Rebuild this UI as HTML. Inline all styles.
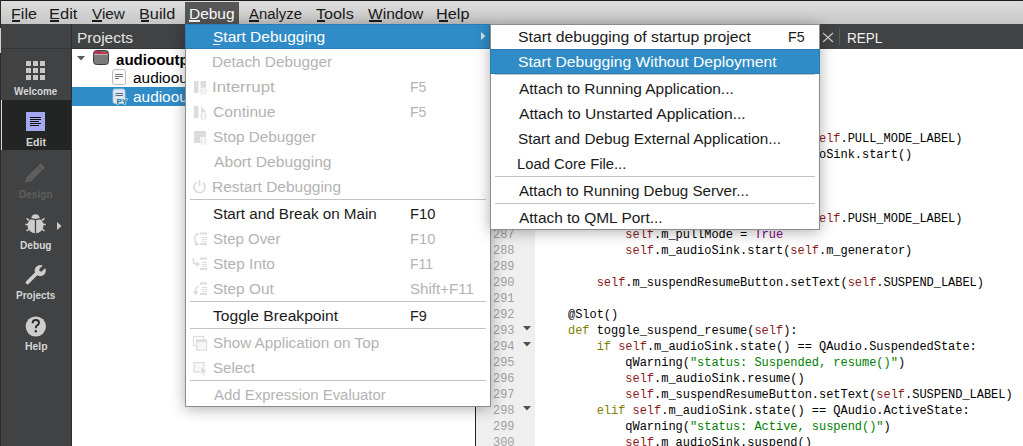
<!DOCTYPE html><html><head><meta charset="utf-8"><style>
*{margin:0;padding:0}
html,body{width:1023px;height:446px;overflow:hidden;background:#fff}
body>div{position:absolute}
.t{position:absolute;white-space:nowrap}
.t u{text-decoration:underline;text-underline-offset:2px}
.c{position:absolute;left:539.3px;font:12px/16px 'Liberation Mono',monospace;letter-spacing:-0.03px;white-space:pre;color:#000}
.ln{position:absolute;left:477.5px;width:37px;text-align:right;font:12px/16px 'Liberation Mono',monospace;letter-spacing:-0.03px;color:#a0a0a0}
</style></head><body>
<div style="left:0px;top:0px;width:1023px;height:446px;background:#ffffff;"></div>
<div style="left:0px;top:0px;width:1023px;height:24px;background:linear-gradient(#dfdfdf,#c7c7c7);"></div>
<div style="left:0px;top:0px;width:1023px;height:1px;background:#1c1c1c;"></div>
<div style="left:0px;top:0px;width:1px;height:446px;background:#2a2a2a;"></div>
<div style="left:1px;top:24px;width:1022px;height:25px;background:#404244;"></div>
<div style="left:1px;top:49px;width:71px;height:397px;background:#404244;"></div>
<div style="left:1px;top:48px;width:474px;height:1px;background:#333537;"></div>
<div style="left:71px;top:24px;width:1px;height:422px;background:#2e2f30;"></div>
<div style="left:1px;top:100px;width:70px;height:50px;background:#232424;"></div>
<div style="left:0px;top:28px;width:1px;height:25px;background:#cfcfcf;"></div>
<div style="left:1px;top:100px;width:1px;height:50px;background:#d8d8d8;"></div>
<div style="left:475px;top:49px;width:1px;height:397px;background:#232323;"></div>
<div style="left:476px;top:49px;width:59px;height:397px;background:#efefef;"></div>
<div style="left:185px;top:2px;width:54px;height:22px;background:#565656;"></div>
<div id="mb0" class="t" style="left:10.74px;top:5.40px;font-size:14px;line-height:18px;color:#1a1a1a;font-weight:normal;font-family:'Liberation Sans',sans-serif;transform:scaleX(1.1485);transform-origin:0 0;">File</div>
<div style="left:12px;top:20px;width:8px;height:2px;background:#1a1a1a;"></div>
<div id="mb1" class="t" style="left:49.21px;top:5.40px;font-size:14px;line-height:18px;color:#1a1a1a;font-weight:normal;font-family:'Liberation Sans',sans-serif;transform:scaleX(1.1786);transform-origin:0 0;">Edit</div>
<div style="left:50px;top:20px;width:9px;height:2px;background:#1a1a1a;"></div>
<div id="mb2" class="t" style="left:92.00px;top:5.40px;font-size:14px;line-height:18px;color:#1a1a1a;font-weight:normal;font-family:'Liberation Sans',sans-serif;transform:scaleX(1.0905);transform-origin:0 0;">View</div>
<div style="left:92px;top:20px;width:10px;height:2px;background:#1a1a1a;"></div>
<div id="mb3" class="t" style="left:138.73px;top:5.40px;font-size:14px;line-height:18px;color:#1a1a1a;font-weight:normal;font-family:'Liberation Sans',sans-serif;transform:scaleX(1.1624);transform-origin:0 0;">Build</div>
<div style="left:141px;top:20px;width:8px;height:2px;background:#1a1a1a;"></div>
<div id="mb4" class="t" style="left:188.79px;top:5.40px;font-size:14px;line-height:18px;color:#ffffff;font-weight:normal;font-family:'Liberation Sans',sans-serif;transform:scaleX(1.1048);transform-origin:0 0;">Debug</div>
<div style="left:189px;top:20px;width:11px;height:2px;background:#ffffff;"></div>
<div id="mb5" class="t" style="left:249.00px;top:5.40px;font-size:14px;line-height:18px;color:#1a1a1a;font-weight:normal;font-family:'Liberation Sans',sans-serif;transform:scaleX(1.0642);transform-origin:0 0;">Analyze</div>
<div style="left:249px;top:20px;width:10px;height:2px;background:#1a1a1a;"></div>
<div id="mb6" class="t" style="left:316.25px;top:5.40px;font-size:14px;line-height:18px;color:#1a1a1a;font-weight:normal;font-family:'Liberation Sans',sans-serif;transform:scaleX(1.1553);transform-origin:0 0;">Tools</div>
<div style="left:317px;top:20px;width:8px;height:2px;background:#1a1a1a;"></div>
<div id="mb7" class="t" style="left:367.50px;top:5.40px;font-size:14px;line-height:18px;color:#1a1a1a;font-weight:normal;font-family:'Liberation Sans',sans-serif;transform:scaleX(1.1108);transform-origin:0 0;">Window</div>
<div style="left:369px;top:20px;width:13px;height:2px;background:#1a1a1a;"></div>
<div id="mb8" class="t" style="left:436.23px;top:5.40px;font-size:14px;line-height:18px;color:#1a1a1a;font-weight:normal;font-family:'Liberation Sans',sans-serif;transform:scaleX(1.1610);transform-origin:0 0;">Help</div>
<div style="left:439px;top:20px;width:9px;height:2px;background:#1a1a1a;"></div>
<div id="ph" class="t" style="left:76.59px;top:29.40px;font-size:14px;line-height:18px;color:#e6e6e6;font-weight:normal;font-family:'Liberation Sans',sans-serif;transform:scaleX(1.1093);transform-origin:0 0;">Projects</div>
<svg style="position:absolute;left:822px;top:32px" width="12" height="11"><path d="M1 1L11 10M11 1L1 10" stroke="#cfcfcf" stroke-width="1.2"/></svg>
<div style="left:839px;top:29px;width:1px;height:16px;background:#5a5c5e;"></div>
<div id="repl" class="t" style="left:847.44px;top:29.40px;font-size:14px;line-height:18px;color:#f0f0f0;font-weight:normal;font-family:'Liberation Sans',sans-serif;transform:scaleX(0.9678);transform-origin:0 0;">REPL</div>
<div style="left:26px;top:61px;width:5px;height:5px;background:#c8c8c8;"></div>
<div style="left:33px;top:61px;width:5px;height:5px;background:#c8c8c8;"></div>
<div style="left:40px;top:61px;width:5px;height:5px;background:#c8c8c8;"></div>
<div style="left:26px;top:68px;width:5px;height:5px;background:#c8c8c8;"></div>
<div style="left:33px;top:68px;width:5px;height:5px;background:#c8c8c8;"></div>
<div style="left:40px;top:68px;width:5px;height:5px;background:#c8c8c8;"></div>
<div style="left:26px;top:75px;width:5px;height:5px;background:#c8c8c8;"></div>
<div style="left:33px;top:75px;width:5px;height:5px;background:#c8c8c8;"></div>
<div style="left:40px;top:75px;width:5px;height:5px;background:#c8c8c8;"></div>
<div id="mw" class="t" style="left:14.30px;top:85.86px;font-size:10px;line-height:12px;color:#d6d6d6;font-weight:bold;font-family:'Liberation Sans',sans-serif;transform:scaleX(0.9883);transform-origin:0 0;">Welcome</div>
<div style="left:26px;top:112px;width:19px;height:19px;background:#a3a8ef;"></div>
<div style="left:30px;top:117px;width:11px;height:1px;background:#111;"></div>
<div style="left:30px;top:119px;width:11px;height:1px;background:#111;"></div>
<div style="left:30px;top:121px;width:9px;height:1px;background:#111;"></div>
<div style="left:30px;top:123px;width:11px;height:1px;background:#111;"></div>
<div style="left:30px;top:125px;width:9px;height:1px;background:#111;"></div>
<div id="me" class="t" style="left:25.51px;top:136.85px;font-size:10px;line-height:12px;color:#d6d6d6;font-weight:bold;font-family:'Liberation Sans',sans-serif;transform:scaleX(1.0575);transform-origin:0 0;">Edit</div>
<svg style="position:absolute;left:20px;top:158px" width="32" height="30"><path d="M5 24.5 L6.6 19.2 L20.6 5.2 L24.8 9.4 L10.8 23.4 Z" fill="#5f5f5f"/><path d="M17.6 8.2 L21.8 12.4" stroke="#404244" stroke-width="1"/></svg>
<div id="md" class="t" style="left:19.05px;top:188.85px;font-size:10px;line-height:12px;color:#5e5e5e;font-weight:bold;font-family:'Liberation Sans',sans-serif;transform:scaleX(1.0068);transform-origin:0 0;">Design</div>
<svg style="position:absolute;left:22px;top:210px" width="28" height="26"><path d="M9.2 8.6 A4.3 4.3 0 0 1 17.8 8.6 Z" fill="#cdcdcd"/><ellipse cx="13.5" cy="15.4" rx="8" ry="7.8" fill="#cdcdcd"/><path d="M7.5 8.3 L13.5 9.6 L19.5 8.3" fill="none" stroke="#404244" stroke-width="1.2"/><path d="M13.5 9.5 V23.5" stroke="#404244" stroke-width="1.3"/><path d="M4.5 8.3L7.2 10.6M3.3 14.5H6.3M4.5 21L7.2 18.8M22.5 8.3L19.8 10.6M23.7 14.5H20.7M22.5 21L19.8 18.8" stroke="#cdcdcd" stroke-width="1.5"/></svg>
<svg style="position:absolute;left:57px;top:222px" width="5" height="8"><path d="M0 0L4.5 4L0 8Z" fill="#cdcdcd"/></svg>
<div id="mdb" class="t" style="left:20.14px;top:239.85px;font-size:10px;line-height:12px;color:#d6d6d6;font-weight:bold;font-family:'Liberation Sans',sans-serif;transform:scaleX(1.0134);transform-origin:0 0;">Debug</div>
<svg style="position:absolute;left:20px;top:260px" width="32" height="30"><path d="M7.5 22.5 L15.5 14.5" stroke="#cdcdcd" stroke-width="3.8" stroke-linecap="round"/><circle cx="20.2" cy="10.6" r="5.6" fill="#cdcdcd"/><path d="M21 9.8 L27 3.8" stroke="#404244" stroke-width="3.4" stroke-linecap="round"/></svg>
<div id="mp" class="t" style="left:16.05px;top:289.86px;font-size:10px;line-height:12px;color:#d6d6d6;font-weight:bold;font-family:'Liberation Sans',sans-serif;transform:scaleX(0.9987);transform-origin:0 0;">Projects</div>
<svg style="position:absolute;left:20px;top:310px" width="32" height="30"><circle cx="15.8" cy="16.5" r="10.1" fill="#cdcdcd"/><path d="M12.6 13.3 Q12.6 10 15.8 10 Q19 10 19 12.8 Q19 14.6 16.8 15.6 Q15.8 16.2 15.8 18.2" fill="none" stroke="#2a2a2a" stroke-width="1.9"/><circle cx="15.8" cy="21.2" r="1.2" fill="#2a2a2a"/></svg>
<div id="mh" class="t" style="left:24.82px;top:340.86px;font-size:10px;line-height:12px;color:#d6d6d6;font-weight:bold;font-family:'Liberation Sans',sans-serif;transform:scaleX(1.0431);transform-origin:0 0;">Help</div>
<svg style="position:absolute;left:77px;top:56px" width="8" height="5"><path d="M0 0H8L4 4.5Z" fill="#5a5a5a"/></svg>
<svg style="position:absolute;left:93px;top:50px" width="16" height="15"><rect x="0.5" y="0.5" width="15" height="14" rx="3" fill="#7a7a7a" stroke="#4a3838"/><path d="M1.2 2.2 Q1.5 1 3 1 H7 L8 2 H14 Q15 2.2 15 3.5 V4 H1.2Z" fill="#c23a3a"/><rect x="1.2" y="1.5" width="6.5" height="2.2" fill="#b02f70"/><rect x="1" y="4" width="14" height="1" fill="#b0b4b4"/></svg>
<div id="t1" class="t" style="left:115.56px;top:50.90px;font-size:14px;line-height:18px;color:#000;font-weight:bold;font-family:'Liberation Sans',sans-serif;transform:scaleX(1.0760);transform-origin:0 0;">audiooutput</div>
<svg style="position:absolute;left:112px;top:69px" width="14" height="16"><rect x="0.5" y="0.5" width="13" height="15" rx="2" fill="#fafafa" stroke="#bdbdbd"/><path d="M3 5.5H11M3 7.5H11M3 9.5H7" stroke="#7a7a7a" stroke-width="1"/></svg>
<div id="t2" class="t" style="left:133.02px;top:69.40px;font-size:14px;line-height:18px;color:#000;font-weight:normal;font-family:'Liberation Sans',sans-serif;transform:scaleX(1.1000);transform-origin:0 0;">audiooutput.pyproject</div>
<div style="left:72px;top:87px;width:403px;height:19px;background:#308cc6;"></div>
<svg style="position:absolute;left:112px;top:88px" width="17" height="17"><rect x="1" y="1" width="12" height="14.5" rx="2" fill="#dce7f3" stroke="#b5c9de" stroke-width="0.8"/><path d="M3.5 5.5H11M3.5 7.5H11" stroke="#5a6878" stroke-width="1"/><text x="4.6" y="15.6" font-family="Liberation Sans, sans-serif" font-weight="bold" font-size="8" fill="#17788b" stroke="#dce7f3" stroke-width="1.2" paint-order="stroke" letter-spacing="-0.3">PY</text></svg>
<div id="t3" class="t" style="left:133.02px;top:88.40px;font-size:14px;line-height:18px;color:#ffffff;font-weight:normal;font-family:'Liberation Sans',sans-serif;transform:scaleX(1.1000);transform-origin:0 0;">audiooutput.py</div>
<svg style="position:absolute;left:523px;top:70px" width="8" height="5"><path d="M0 0H8L4 4.5Z" fill="#505050"/></svg>
<svg style="position:absolute;left:523px;top:118px" width="8" height="5"><path d="M0 0H8L4 4.5Z" fill="#505050"/></svg>
<svg style="position:absolute;left:523px;top:198px" width="8" height="5"><path d="M0 0H8L4 4.5Z" fill="#505050"/></svg>
<svg style="position:absolute;left:523px;top:326px" width="8" height="5"><path d="M0 0H8L4 4.5Z" fill="#505050"/></svg>
<svg style="position:absolute;left:523px;top:342px" width="8" height="5"><path d="M0 0H8L4 4.5Z" fill="#505050"/></svg>
<svg style="position:absolute;left:523px;top:406px" width="8" height="5"><path d="M0 0H8L4 4.5Z" fill="#505050"/></svg>
<div class="c" style="top:50.5px">    @Slot()</div>
<div class="ln" style="top:50.5px">276</div>
<div class="c" style="top:66.5px">    <span style="color:#808000">def</span> toggle_mode(<span style="color:#8b1c1c">self</span>):</div>
<div class="ln" style="top:66.5px">277</div>
<div class="c" style="top:82.5px">        <span style="color:#8b1c1c">self</span>.m_pullTimer.stop()</div>
<div class="ln" style="top:82.5px">278</div>
<div class="c" style="top:98.5px">        <span style="color:#8b1c1c">self</span>.m_audioSink.stop()</div>
<div class="ln" style="top:98.5px">279</div>
<div class="c" style="top:114.5px">        <span style="color:#808000">if</span> <span style="color:#8b1c1c">self</span>.m_pullMode:</div>
<div class="ln" style="top:114.5px">280</div>
<div class="c" style="top:130.5px">            <span style="color:#8b1c1c">self</span>.m_modeButton.setText(<span style="color:#8b1c1c">self</span>.PULL_MODE_LABEL)</div>
<div class="ln" style="top:130.5px">281</div>
<div class="c" style="top:146.5px">            <span style="color:#8b1c1c">self</span>.m_output = <span style="color:#8b1c1c">self</span>.m_audioSink.start()</div>
<div class="ln" style="top:146.5px">282</div>
<div class="c" style="top:162.5px">            <span style="color:#8b1c1c">self</span>.m_pullMode = <span style="color:#800080">False</span></div>
<div class="ln" style="top:162.5px">283</div>
<div class="c" style="top:178.5px">            <span style="color:#8b1c1c">self</span>.m_pullTimer.start(20)</div>
<div class="ln" style="top:178.5px">284</div>
<div class="c" style="top:194.5px">        <span style="color:#808000">else</span>:</div>
<div class="ln" style="top:194.5px">285</div>
<div class="c" style="top:210.5px">            <span style="color:#8b1c1c">self</span>.m_modeButton.setText(<span style="color:#8b1c1c">self</span>.PUSH_MODE_LABEL)</div>
<div class="ln" style="top:210.5px">286</div>
<div class="c" style="top:226.5px">            <span style="color:#8b1c1c">self</span>.m_pullMode = <span style="color:#800080">True</span></div>
<div class="ln" style="top:226.5px">287</div>
<div class="c" style="top:242.5px">            <span style="color:#8b1c1c">self</span>.m_audioSink.start(<span style="color:#8b1c1c">self</span>.m_generator)</div>
<div class="ln" style="top:242.5px">288</div>
<div class="c" style="top:258.5px"></div>
<div class="ln" style="top:258.5px">289</div>
<div class="c" style="top:274.5px">        <span style="color:#8b1c1c">self</span>.m_suspendResumeButton.setText(<span style="color:#8b1c1c">self</span>.SUSPEND_LABEL)</div>
<div class="ln" style="top:274.5px">290</div>
<div class="c" style="top:290.5px"></div>
<div class="ln" style="top:290.5px">291</div>
<div class="c" style="top:306.5px">    @Slot()</div>
<div class="ln" style="top:306.5px">292</div>
<div class="c" style="top:322.5px">    <span style="color:#808000">def</span> toggle_suspend_resume(<span style="color:#8b1c1c">self</span>):</div>
<div class="ln" style="top:322.5px">293</div>
<div class="c" style="top:338.5px">        <span style="color:#808000">if</span> <span style="color:#8b1c1c">self</span>.m_audioSink.state() == QAudio.SuspendedState:</div>
<div class="ln" style="top:338.5px">294</div>
<div class="c" style="top:354.5px">            qWarning(<span style="color:#008000">"status: Suspended, resume()"</span>)</div>
<div class="ln" style="top:354.5px">295</div>
<div class="c" style="top:370.5px">            <span style="color:#8b1c1c">self</span>.m_audioSink.resume()</div>
<div class="ln" style="top:370.5px">296</div>
<div class="c" style="top:386.5px">            <span style="color:#8b1c1c">self</span>.m_suspendResumeButton.setText(<span style="color:#8b1c1c">self</span>.SUSPEND_LABEL)</div>
<div class="ln" style="top:386.5px">297</div>
<div class="c" style="top:402.5px">        <span style="color:#808000">elif</span> <span style="color:#8b1c1c">self</span>.m_audioSink.state() == QAudio.ActiveState:</div>
<div class="ln" style="top:402.5px">298</div>
<div class="c" style="top:418.5px">            qWarning(<span style="color:#008000">"status: Active, suspend()"</span>)</div>
<div class="ln" style="top:418.5px">299</div>
<div class="c" style="top:434.5px">            <span style="color:#8b1c1c">self</span>.m_audioSink.suspend()</div>
<div class="ln" style="top:434.5px">300</div>
<div style="left:185px;top:24px;width:306px;height:383px;background:#fff;box-shadow:0 2px 14px rgba(0,0,0,0.32);box-sizing:border-box;border:1px solid #8c8c8c;"></div>
<div style="left:185px;top:24px;width:305px;height:25px;background:#308cc6;box-sizing:border-box;border:1px solid #2b7cb4;"></div>
<div id="dm0" class="t" style="left:213.02px;top:28.40px;font-size:14px;line-height:18px;color:#ffffff;font-weight:normal;font-family:'Liberation Sans',sans-serif;transform:scaleX(1.1085);transform-origin:0 0;">Start Debugging</div>
<div style="left:213px;top:44px;width:7px;height:1px;background:#ffffff;"></div>
<div id="dm1" class="t" style="left:212.30px;top:53.40px;font-size:14px;line-height:18px;color:#b3b3b3;font-weight:normal;font-family:'Liberation Sans',sans-serif;transform:scaleX(1.0951);transform-origin:0 0;">Detach Debugger</div>
<div id="dm2" class="t" style="left:212.18px;top:78.40px;font-size:14px;line-height:18px;color:#b3b3b3;font-weight:normal;font-family:'Liberation Sans',sans-serif;transform:scaleX(1.2037);transform-origin:0 0;">Interrupt</div>
<div id="dms2" class="t" style="left:409.70px;top:78.40px;font-size:14px;line-height:18px;color:#b3b3b3;font-weight:normal;font-family:'Liberation Sans',sans-serif;transform:scaleX(1.0016);transform-origin:0 0;">F5</div>
<div id="dm3" class="t" style="left:212.77px;top:103.40px;font-size:14px;line-height:18px;color:#b3b3b3;font-weight:normal;font-family:'Liberation Sans',sans-serif;transform:scaleX(1.1146);transform-origin:0 0;">Continue</div>
<div id="dms3" class="t" style="left:409.70px;top:103.40px;font-size:14px;line-height:18px;color:#b3b3b3;font-weight:normal;font-family:'Liberation Sans',sans-serif;transform:scaleX(1.0016);transform-origin:0 0;">F5</div>
<div id="dm4" class="t" style="left:213.02px;top:128.40px;font-size:14px;line-height:18px;color:#b3b3b3;font-weight:normal;font-family:'Liberation Sans',sans-serif;transform:scaleX(1.0921);transform-origin:0 0;">Stop Debugger</div>
<div id="dm5" class="t" style="left:213.50px;top:153.40px;font-size:14px;line-height:18px;color:#b3b3b3;font-weight:normal;font-family:'Liberation Sans',sans-serif;transform:scaleX(1.1190);transform-origin:0 0;">Abort Debugging</div>
<div id="dm6" class="t" style="left:212.29px;top:178.40px;font-size:14px;line-height:18px;color:#b3b3b3;font-weight:normal;font-family:'Liberation Sans',sans-serif;transform:scaleX(1.1057);transform-origin:0 0;">Restart Debugging</div>
<div style="left:190px;top:199px;width:296px;height:1px;background:#c3c3c3;"></div>
<div id="dm8" class="t" style="left:213.03px;top:205.40px;font-size:14px;line-height:18px;color:#1a1a1a;font-weight:normal;font-family:'Liberation Sans',sans-serif;transform:scaleX(1.0845);transform-origin:0 0;">Start and Break on Main</div>
<div id="dms8" class="t" style="left:409.65px;top:205.40px;font-size:14px;line-height:18px;color:#1a1a1a;font-weight:normal;font-family:'Liberation Sans',sans-serif;transform:scaleX(1.0493);transform-origin:0 0;">F10</div>
<div id="dm9" class="t" style="left:213.03px;top:230.40px;font-size:14px;line-height:18px;color:#b3b3b3;font-weight:normal;font-family:'Liberation Sans',sans-serif;transform:scaleX(1.0700);transform-origin:0 0;">Step Over</div>
<div id="dms9" class="t" style="left:409.65px;top:230.40px;font-size:14px;line-height:18px;color:#b3b3b3;font-weight:normal;font-family:'Liberation Sans',sans-serif;transform:scaleX(1.0493);transform-origin:0 0;">F10</div>
<div id="dm10" class="t" style="left:213.02px;top:255.40px;font-size:14px;line-height:18px;color:#b3b3b3;font-weight:normal;font-family:'Liberation Sans',sans-serif;transform:scaleX(1.1047);transform-origin:0 0;">Step Into</div>
<div id="dms10" class="t" style="left:409.71px;top:255.40px;font-size:14px;line-height:18px;color:#b3b3b3;font-weight:normal;font-family:'Liberation Sans',sans-serif;transform:scaleX(0.9989);transform-origin:0 0;">F11</div>
<div id="dm11" class="t" style="left:213.02px;top:280.40px;font-size:14px;line-height:18px;color:#b3b3b3;font-weight:normal;font-family:'Liberation Sans',sans-serif;transform:scaleX(1.0991);transform-origin:0 0;">Step Out</div>
<div id="dms11" class="t" style="left:410.33px;top:280.40px;font-size:14px;line-height:18px;color:#b3b3b3;font-weight:normal;font-family:'Liberation Sans',sans-serif;transform:scaleX(1.0760);transform-origin:0 0;">Shift+F11</div>
<div style="left:190px;top:301px;width:296px;height:1px;background:#c3c3c3;"></div>
<div id="dm13" class="t" style="left:213.26px;top:307.40px;font-size:14px;line-height:18px;color:#1a1a1a;font-weight:normal;font-family:'Liberation Sans',sans-serif;transform:scaleX(1.1152);transform-origin:0 0;">Toggle Breakpoint</div>
<div id="dms13" class="t" style="left:409.67px;top:307.40px;font-size:14px;line-height:18px;color:#1a1a1a;font-weight:normal;font-family:'Liberation Sans',sans-serif;transform:scaleX(1.0288);transform-origin:0 0;">F9</div>
<div style="left:190px;top:328px;width:296px;height:1px;background:#c3c3c3;"></div>
<div id="dm15" class="t" style="left:213.02px;top:334.40px;font-size:14px;line-height:18px;color:#b3b3b3;font-weight:normal;font-family:'Liberation Sans',sans-serif;transform:scaleX(1.0911);transform-origin:0 0;">Show Application on Top</div>
<div id="dm16" class="t" style="left:213.03px;top:359.40px;font-size:14px;line-height:18px;color:#b3b3b3;font-weight:normal;font-family:'Liberation Sans',sans-serif;transform:scaleX(1.0773);transform-origin:0 0;">Select</div>
<div style="left:190px;top:380px;width:296px;height:1px;background:#c3c3c3;"></div>
<div id="dm18" class="t" style="left:213.50px;top:386.40px;font-size:14px;line-height:18px;color:#b3b3b3;font-weight:normal;font-family:'Liberation Sans',sans-serif;transform:scaleX(1.0663);transform-origin:0 0;">Add Expression Evaluator</div>
<svg style="position:absolute;left:481px;top:32px" width="5" height="8"><path d="M0 0L4.5 4L0 8Z" fill="#cfe2f3"/></svg>
<svg style="position:absolute;left:190px;top:78px" width="20" height="20"><rect x="4" y="3" width="4.5" height="12" fill="#dcdcdc"/><rect x="10.5" y="3" width="5.5" height="7" fill="#dcdcdc"/><path d="M11 10H16M10 12H17M10 14H17M11 16H16" stroke="#dcdcdc" stroke-width="1.2"/><path d="M13.5 9V17" stroke="#fff" stroke-width="1"/></svg>
<svg style="position:absolute;left:190px;top:103px" width="20" height="20"><rect x="4" y="3" width="4.5" height="12" fill="#dcdcdc"/><path d="M11 3L16 9L11 10Z" fill="#dcdcdc"/><path d="M11 10H16M10 12H17M10 14H17M11 16H16" stroke="#dcdcdc" stroke-width="1.2"/><path d="M13.5 9V17" stroke="#fff" stroke-width="1"/></svg>
<svg style="position:absolute;left:190px;top:128px" width="20" height="20"><path d="M4 3H16V9H10V15H4Z" fill="#dcdcdc"/><path d="M11 10H16M10 12H17M10 14H17M11 16H16" stroke="#dcdcdc" stroke-width="1.2"/><path d="M13.5 9V17" stroke="#fff" stroke-width="1"/></svg>
<svg style="position:absolute;left:192px;top:179px" width="16" height="16"><path d="M4.5 3.5 A5.5 5.5 0 1 0 10.5 3.5" fill="none" stroke="#dcdcdc" stroke-width="1.8"/><path d="M7.5 1V7" stroke="#dcdcdc" stroke-width="1.8"/></svg>
<svg style="position:absolute;left:192px;top:232px" width="17" height="16"><path d="M8 1.5H15M8 12H15" stroke="#dcdcdc" stroke-width="2"/><path d="M10 5.5H15M10 7.5H15M10 9.5H15" stroke="#dcdcdc" stroke-width="1"/><path d="M7 1.5 Q2.5 2 2.5 7 Q2.5 10 5 11.5" fill="none" stroke="#dcdcdc" stroke-width="1.5"/><path d="M3.5 9.5L8 13L3 13.5Z" fill="#dcdcdc"/></svg>
<svg style="position:absolute;left:192px;top:257px" width="17" height="16"><path d="M8 1.5H15M8 12H15" stroke="#dcdcdc" stroke-width="2"/><path d="M10 5.5H15M10 7.5H15M10 9.5H15" stroke="#dcdcdc" stroke-width="1"/><path d="M1.5 1V5Q1.5 7 3.5 7H5" fill="none" stroke="#dcdcdc" stroke-width="1.5"/><path d="M4.5 4L8 7L4.5 10Z" fill="#dcdcdc"/></svg>
<svg style="position:absolute;left:192px;top:282px" width="17" height="16"><path d="M8 1.5H15M8 12H15" stroke="#dcdcdc" stroke-width="2"/><path d="M10 5.5H15M10 7.5H15M10 9.5H15" stroke="#dcdcdc" stroke-width="1"/><path d="M7 4 Q4 4.5 3.5 10" fill="none" stroke="#dcdcdc" stroke-width="1.5"/><path d="M1 9.5H6.5L3.5 13.5Z" fill="#dcdcdc"/></svg>
<svg style="position:absolute;left:192px;top:335px" width="16" height="16"><rect x="1.5" y="1.5" width="10" height="9" fill="none" stroke="#dcdcdc" stroke-width="1.2"/><rect x="4.5" y="5" width="10" height="10" fill="#f7f7f7" stroke="#dcdcdc" stroke-width="1.2"/><path d="M4.5 6H14.5" stroke="#dcdcdc" stroke-width="2"/></svg>
<svg style="position:absolute;left:193px;top:361px" width="16" height="16"><rect x="1" y="1.5" width="10" height="9.5" fill="#f7f7f7" stroke="#dcdcdc" stroke-width="1.2"/><path d="M8 5L14 11L11 11.5L12.5 14.5L11 15L9.5 12L8 14Z" fill="#dcdcdc" stroke="#fff" stroke-width="0.6"/></svg>
<div style="left:490px;top:24px;width:330px;height:206px;background:#fff;box-shadow:0 2px 14px rgba(0,0,0,0.32);box-sizing:border-box;border:1px solid #8c8c8c;"></div>
<div id="sm0" class="t" style="left:518.11px;top:28.40px;font-size:14px;line-height:18px;color:#1a1a1a;font-weight:normal;font-family:'Liberation Sans',sans-serif;transform:scaleX(1.1247);transform-origin:0 0;">Start debugging of startup project</div>
<div id="sms0" class="t" style="left:787.79px;top:28.40px;font-size:14px;line-height:18px;color:#1a1a1a;font-weight:normal;font-family:'Liberation Sans',sans-serif;transform:scaleX(1.0152);transform-origin:0 0;">F5</div>
<div style="left:490px;top:49px;width:330px;height:25px;background:#308cc6;box-sizing:border-box;border:1px solid #2b7cb4;"></div>
<div id="sm1" class="t" style="left:518.11px;top:53.40px;font-size:14px;line-height:18px;color:#ffffff;font-weight:normal;font-family:'Liberation Sans',sans-serif;transform:scaleX(1.1186);transform-origin:0 0;">Start Debugging Without Deployment</div>
<div style="left:495px;top:74px;width:320px;height:1px;background:#c3c3c3;"></div>
<div id="sm3" class="t" style="left:518.60px;top:80.40px;font-size:14px;line-height:18px;color:#1a1a1a;font-weight:normal;font-family:'Liberation Sans',sans-serif;transform:scaleX(1.1037);transform-origin:0 0;">Attach to Running Application...</div>
<div id="sm4" class="t" style="left:518.60px;top:105.40px;font-size:14px;line-height:18px;color:#1a1a1a;font-weight:normal;font-family:'Liberation Sans',sans-serif;transform:scaleX(1.1159);transform-origin:0 0;">Attach to Unstarted Application...</div>
<div id="sm5" class="t" style="left:518.12px;top:130.40px;font-size:14px;line-height:18px;color:#1a1a1a;font-weight:normal;font-family:'Liberation Sans',sans-serif;transform:scaleX(1.0937);transform-origin:0 0;">Start and Debug External Application...</div>
<div id="sm6" class="t" style="left:517.45px;top:155.40px;font-size:14px;line-height:18px;color:#1a1a1a;font-weight:normal;font-family:'Liberation Sans',sans-serif;transform:scaleX(1.0560);transform-origin:0 0;">Load Core File...</div>
<div style="left:495px;top:176px;width:320px;height:1px;background:#c3c3c3;"></div>
<div id="sm8" class="t" style="left:518.60px;top:182.40px;font-size:14px;line-height:18px;color:#1a1a1a;font-weight:normal;font-family:'Liberation Sans',sans-serif;transform:scaleX(1.0819);transform-origin:0 0;">Attach to Running Debug Server...</div>
<div style="left:495px;top:203px;width:320px;height:1px;background:#c3c3c3;"></div>
<div id="sm10" class="t" style="left:518.60px;top:209.40px;font-size:14px;line-height:18px;color:#1a1a1a;font-weight:normal;font-family:'Liberation Sans',sans-serif;transform:scaleX(1.1031);transform-origin:0 0;">Attach to QML Port...</div>
</body></html>
